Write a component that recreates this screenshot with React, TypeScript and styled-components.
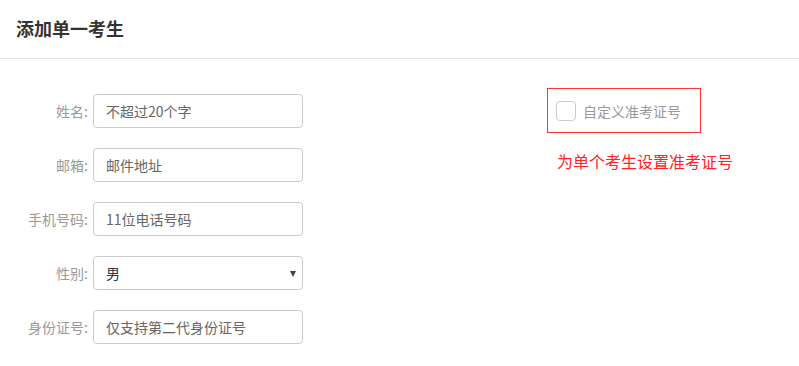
import React from "react";
import styled, { createGlobalStyle } from "styled-components";

const Global = createGlobalStyle`
  body {
    margin: 0;
    background: #fff;
    font-family: "Noto Sans CJK SC", "Noto Sans", sans-serif;
  }
  * { box-sizing: border-box; }
`;

const Page = styled.div`
  width: 799px;
  height: 366px;
  background: #fff;
`;

const Header = styled.div`
  height: 59px;
  padding-left: 16px;
  display: flex;
  align-items: center;
  border-bottom: 1px solid #e5e5e5;
`;

const Title = styled.h1`
  margin: 0;
  font-size: 18px;
  font-weight: 700;
  color: #333;
  line-height: 24px;
  margin-top: -2px;
`;

const Body = styled.div`
  display: flex;
  padding-top: 29px;
`;

const Form = styled.div`
  width: 303px;
  padding-top: 6px;
  display: flex;
  flex-direction: column;
  gap: 20px;
`;

const Row = styled.div`
  display: flex;
  align-items: center;
  gap: 5px;
`;

const Label = styled.label`
  width: 88px;
  text-align: right;
  font-size: 14px;
  color: #999;
  line-height: 20px;
`;

const Field = styled.div<{ $dark?: boolean }>`
  position: relative;
  width: 210px;
  height: 34px;
  border: 1px solid #ccc;
  border-radius: 4px;
  padding: 0 12px;
  display: flex;
  align-items: center;
  font-size: 14px;
  color: ${(p) => (p.$dark ? "#333" : "#666")};
`;

const Arrow = styled.span`
  position: absolute;
  right: 6px;
  top: 14px;
  width: 0;
  height: 0;
  border-left: 3.5px solid transparent;
  border-right: 3.5px solid transparent;
  border-top: 6px solid #444;
`;

const Side = styled.div`
  margin-left: 244px;
  display: flex;
  flex-direction: column;
`;

const CheckBox = styled.div`
  width: 154px;
  height: 45px;
  border: 1px solid #f33;
  display: flex;
  align-items: center;
  padding-left: 8px;
  gap: 7px;
`;

const Square = styled.span`
  width: 20px;
  height: 20px;
  border: 1px solid #ccc;
  border-radius: 4px;
  margin-top: 1px;
`;

const CheckText = styled.span`
  font-size: 14px;
  color: #999;
`;

const Hint = styled.div`
  margin-top: 16px;
  padding-left: 10px;
  font-size: 16px;
  line-height: 24px;
  color: #f22;
`;

const rows: { label: string; value: string; dark?: boolean; select?: boolean }[] = [
  { label: "姓名:", value: "不超过20个字" },
  { label: "邮箱:", value: "邮件地址" },
  { label: "手机号码:", value: "11位电话号码" },
  { label: "性别:", value: "男", dark: true, select: true },
  { label: "身份证号:", value: "仅支持第二代身份证号" },
];

export default function App() {
  return (
    <Page>
      <Global />
      <Header>
        <Title>添加单一考生</Title>
      </Header>
      <Body>
        <Form>
          {rows.map((r) => (
            <Row key={r.label}>
              <Label>{r.label}</Label>
              <Field $dark={r.dark}>
                {r.value}
                {r.select && <Arrow />}
              </Field>
            </Row>
          ))}
        </Form>
        <Side>
          <CheckBox>
            <Square />
            <CheckText>自定义准考证号</CheckText>
          </CheckBox>
          <Hint>为单个考生设置准考证号</Hint>
        </Side>
      </Body>
    </Page>
  );
}
